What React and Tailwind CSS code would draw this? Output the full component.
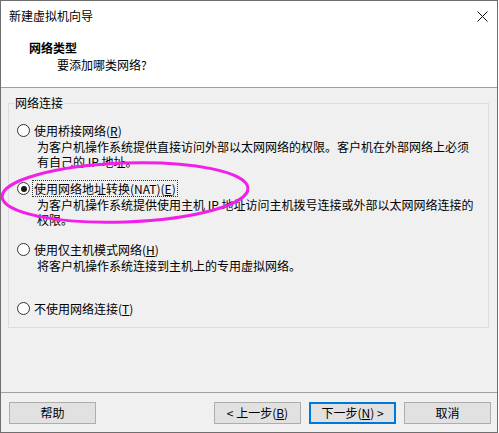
import React from "react";

function Radio({ checked }) {
  return (
    <div className="w-[13px] h-[13px] rounded-full border border-[#333333] bg-white flex items-center justify-center shrink-0">
      {checked && <div className="w-[6px] h-[6px] rounded-full bg-[#1a1a1a]" />}
    </div>
  );
}

function Option({ checked, focused, label, lines, className }) {
  return (
    <div className={className}>
      <div className="flex items-center h-[15px] ml-[8px]">
        <Radio checked={checked} />
        <div
          className={
            "ml-[2px] px-[1px] h-[17px] flex items-center leading-[15px] border " +
            (focused ? "border-dotted border-[#333333]" : "border-transparent")
          }
        >
          {label}
        </div>
      </div>
      {lines && (
        <div className="pl-[28px] mt-[1px]">
          {lines.map((l, i) => (
            <div key={i} className="h-[15px] leading-[15px] whitespace-nowrap">
              {l}
            </div>
          ))}
        </div>
      )}
    </div>
  );
}

function Btn({ children, primary }) {
  return (
    <div
      className={
        "w-[87px] h-[22px] flex items-center justify-center bg-[#e1e1e1] leading-[14px] " +
        (primary ? "border-2 border-[#0078d7]" : "border border-[#adadad]")
      }
    >
      {children}
    </div>
  );
}

export default function App() {
  return (
    <div
      className="w-[499px] h-[433px] bg-white relative text-[12px] text-black"
      style={{ fontFamily: '"Noto Sans CJK SC", "Noto Sans", sans-serif' }}
    >
      <div className="w-[498px] h-[433px] border border-[#6f6f6f] flex flex-col">
        {/* title bar */}
        <div className="h-[29px] bg-white flex items-center justify-between pl-[8px] pr-[8px]">
          <span className="leading-[14px] mt-[1px]">新建虚拟机向导</span>
          <svg width="11" height="11" viewBox="0 0 11 11" className="mt-[1px] mr-[1px]">
            <path d="M0.5 0.5 L10.5 10.5 M10.5 0.5 L0.5 10.5" stroke="#111" strokeWidth="1" fill="none" />
          </svg>
        </div>
        {/* header */}
        <div className="h-[57px] bg-white relative">
          <div className="ml-[28px] mt-[10px] font-bold leading-[15px]">网络类型</div>
          <div className="ml-[56px] mt-[2px] leading-[15px]">要添加哪类网络?</div>
        </div>
        <div className="h-px bg-[#a0a0a0]" />
        {/* body */}
        <div className="h-[304px] bg-[#f0f0f0] relative">
          <div className="ml-[7px] mt-[15px] w-[481px] h-[225px] border border-[#dcdcdc] relative">
            <span className="absolute left-[5px] top-[-8px] px-[1px] bg-[#f0f0f0] leading-[14px]">网络连接</span>
            <Option
              className="mt-[19px]"
              label={<span>使用桥接网络(<u>R</u>)</span>}
              lines={[
                "为客户机操作系统提供直接访问外部以太网网络的权限。客户机在外部网络上必须",
                "有自己的 IP 地址。",
              ]}
            />
            <Option
              className="mt-[12px]"
              checked
              focused
              label={<span>使用网络地址转换(NAT)(<u>E</u>)</span>}
              lines={[
                "为客户机操作系统提供使用主机 IP 地址访问主机拨号连接或外部以太网网络连接的",
                "权限。",
              ]}
            />
            <Option
              className="mt-[15px]"
              label={<span>使用仅主机模式网络(<u>H</u>)</span>}
              lines={["将客户机操作系统连接到主机上的专用虚拟网络。"]}
            />
            <Option className="mt-[28px]" label={<span>不使用网络连接(<u>T</u>)</span>} />
          </div>
        </div>
        <div className="h-px bg-[#a0a0a0]" />
        {/* footer */}
        <div className="flex-1 bg-[#f0f0f0] flex items-start justify-between pt-[9px] pl-[8px] pr-[6px]">
          <Btn>帮助</Btn>
          <div className="flex gap-[8px]">
            <Btn>&lt; 上一步(<u>B</u>)</Btn>
            <Btn primary>下一步(<u>N</u>) &gt;</Btn>
            <Btn>取消</Btn>
          </div>
        </div>
      </div>
      {/* annotation ellipse */}
      <svg className="absolute left-0 top-0 pointer-events-none" width="499" height="433">
        <ellipse
          cx="125"
          cy="192.5"
          rx="123"
          ry="29.5"
          transform="rotate(-2 125 192.5)"
          fill="none"
          stroke="#f020e8"
          strokeWidth="3"
        />
      </svg>
    </div>
  );
}
